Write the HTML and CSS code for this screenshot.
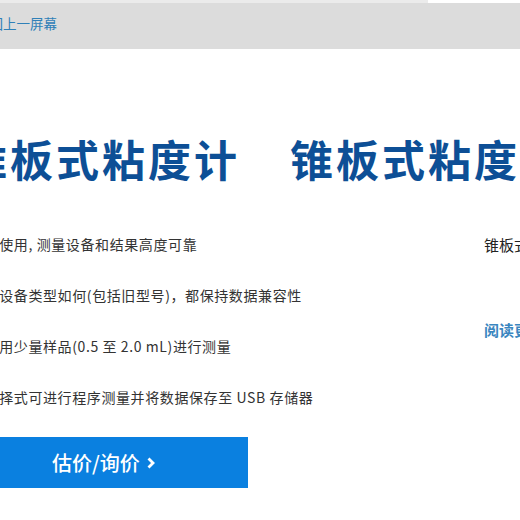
FILE: index.html
```html
<!DOCTYPE html>
<html lang="zh-CN">
<head>
<meta charset="utf-8">
<title>锥板式粘度计</title>
<link rel="stylesheet" href="styles.css">
</head>
<body>
<div class="topstrip"></div>
<nav class="backbar"><a class="back" href="#">返回上一屏幕</a></nav>
<main class="content">
  <div class="titles">
    <h1 class="title">锥板式粘度计</h1>
    <h1 class="title">锥板式粘度计</h1>
  </div>
  <div class="cols">
    <ul class="features">
      <li>易于使用, 测量设备和结果高度可靠</li>
      <li>无论设备类型如何(包括旧型号)，都保持数据兼容性</li>
      <li>可采用少量样品(0.5 至 2.0 mL)进行测量</li>
      <li>自选择式可进行程序测量并将数据保存至 USB 存储器</li>
    </ul>
    <aside class="side">
      <p class="side-text">锥板式粘度计</p>
      <a class="more" href="#">阅读更多</a>
    </aside>
  </div>
  <a class="cta" href="#">估价/询价 <svg class="chev" viewBox="0 0 8 12" width="8" height="12"><polyline points="1.5,1.5 6,6 1.5,10.5" fill="none" stroke="#fff" stroke-width="2.8" stroke-linejoin="miter"/></svg></a>
</main>
</body>
</html>
```
FILE: styles.css
```css
html, body {
  margin: 0;
  padding: 0;
  background: #ffffff;
  overflow: hidden;
  width: 520px;
  height: 520px;
}
body {
  font-family: "Noto Sans CJK SC", "Noto Sans", "Liberation Sans", sans-serif;
  color: #333333;
}
a { text-decoration: none; }

.topstrip {
  width: 428px;
  height: 3px;
  background: #ebebeb;
}
.backbar {
  height: 46px;
  background: #dcdcdc;
  display: flex;
  align-items: center;
  padding-bottom: 4px;
  box-sizing: border-box;
  white-space: nowrap;
}
.back {
  margin-left: -24px;
  font-size: 13.5px;
  color: #2f80b8;
  line-height: 1;
}

.content {
  padding-top: 84px;
}
.titles {
  display: flex;
  gap: 50px;
  margin-left: -36px;
  white-space: nowrap;
}
.title {
  margin: 0;
  font-size: 43px;
  line-height: 50px;
  font-weight: 700;
  letter-spacing: 3px;
  color: #0d4f96;
}

.cols {
  display: flex;
  gap: 44px;
  margin-top: 51px;
  white-space: nowrap;
}
.features {
  flex: 0 0 470px;
  margin: 0 0 0 -30px;
  padding: 0;
  list-style: none;
  display: flex;
  flex-direction: column;
  gap: 30px;
}
.features li {
  font-size: 14px;
  line-height: 21px;
  letter-spacing: 0.6px;
  color: #333333;
}
.side {
  display: flex;
  flex-direction: column;
}
.side-text {
  margin: 0;
  font-size: 15px;
  line-height: 21px;
  color: #222222;
}
.more {
  margin-top: 64px;
  font-size: 15px;
  line-height: 21px;
  font-weight: 700;
  color: #3a86c0;
}

.cta {
  margin-top: 29px;
  width: 248px;
  height: 51px;
  box-sizing: border-box;
  padding-left: 52px;
  background: #0a80e0;
  color: #ffffff;
  font-size: 20px;
  font-weight: 500;
  display: flex;
  align-items: center;
  gap: 7px;
}
.chev {
  display: block;
}
```
